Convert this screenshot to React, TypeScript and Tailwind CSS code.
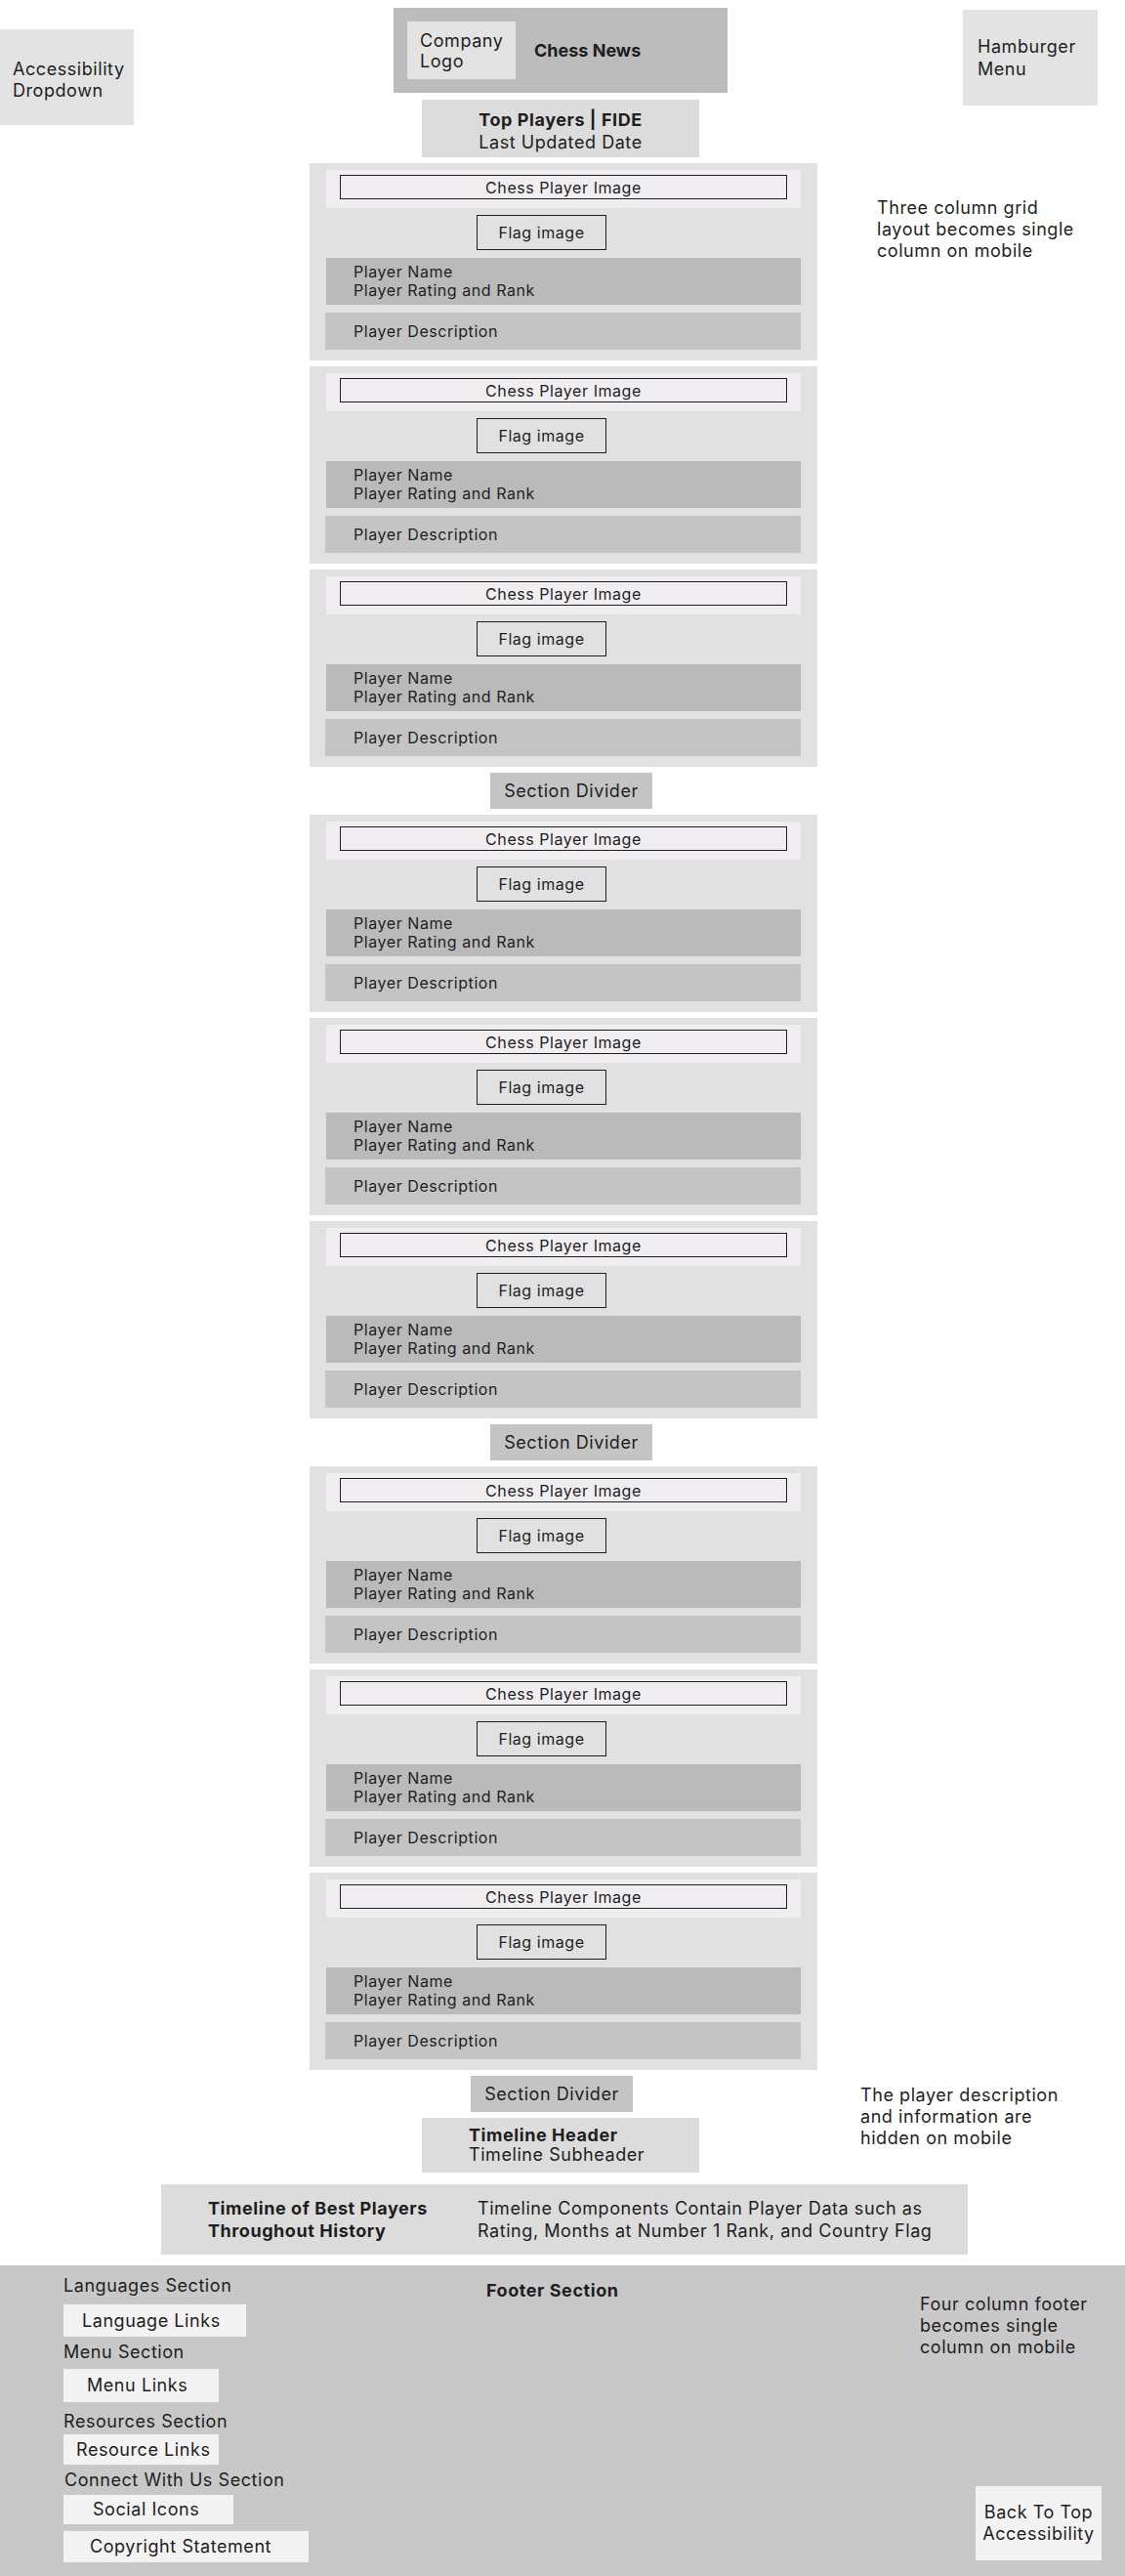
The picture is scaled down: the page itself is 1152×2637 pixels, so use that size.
import React from "react";

function Card() {
  return (
    <div className="w-[520px] h-[202px] bg-[#e1e1e1] px-[17px] pt-[7px] shrink-0">
      <div className="h-[39px] bg-[#f0eef0] px-[14px] pt-[5px]">
        <div className="h-[25px] border border-[#1e1e1e] flex items-center justify-center text-[16px]">
          Chess Player Image
        </div>
      </div>
      <div className="mt-[7px] ml-[154px] w-[133px] h-[36px] border border-[#1e1e1e] flex items-center justify-center text-[16px]">
        Flag image
      </div>
      <div className="mt-[8px] h-[48px] bg-[#bababa] pl-[28px] flex flex-col justify-center text-[16px] leading-[19px]">
        <span>Player Name</span>
        <span>Player Rating and Rank</span>
      </div>
      <div className="mt-[8px] -ml-px h-[38px] bg-[#c4c4c4] pl-[29px] flex items-center text-[16px]">
        Player Description
      </div>
    </div>
  );
}

function Divider({ className }: { className: string }) {
  return (
    <div
      className={
        "w-[166px] h-[37px] bg-[#c4c4c4] flex items-center justify-center text-[18px] " +
        className
      }
    >
      Section Divider
    </div>
  );
}

function FooterLink({ label, w, h, pl }: { label: string; w: string; h: string; pl: string }) {
  return (
    <div className={"bg-[#f3f3f3] flex items-center text-[18px] " + w + " " + h + " " + pl}>{label}</div>
  );
}

export default function App() {
  return (
    <div className="w-[1152px] min-h-[2637px] bg-white text-[#1e1e1e] font-['Inter',sans-serif] tracking-[0.035em] flex flex-col">
      {/* Header row */}
      <div className="flex items-start h-[161px]">
        <div className="mt-[30px] w-[137px] h-[98px] bg-[#e3e3e3] flex flex-col justify-center pl-[13px] pt-[6px] text-[18px] leading-[22px]">
          <span>Accessibility</span>
          <span>Dropdown</span>
        </div>
        <div className="ml-[266px] w-[342px] flex flex-col">
          <div className="mt-[8px] h-[87px] bg-[#bcbcbc] flex items-center pl-[14px]">
            <div className="w-[111px] h-[59px] bg-[#e3e3e3] flex flex-col justify-center pl-[13px] text-[18px] leading-[21px]">
              <span>Company</span>
              <span>Logo</span>
            </div>
            <span className="ml-[19px] text-[18px] font-bold tracking-normal">Chess News</span>
          </div>
          <div className="mt-[7px] ml-[29px] w-[284px] h-[59px] bg-[#dcdcdc] flex flex-col items-center justify-center pt-[4px] text-[18px] leading-[23px]">
            <span className="font-bold">Top Players | FIDE</span>
            <span>Last Updated Date</span>
          </div>
        </div>
        <div className="ml-auto mr-[28px] mt-[10px] w-[138px] h-[98px] bg-[#e3e3e3] flex flex-col justify-center pl-[15px] text-[18px] leading-[23px]">
          <span>Hamburger</span>
          <span>Menu</span>
        </div>
      </div>

      {/* Cards row */}
      <div className="flex items-start mt-[6px]">
        <div className="ml-[317px] w-[520px] flex flex-col gap-[6px]">
          <Card />
          <Card />
          <Card />
          <Divider className="ml-[185px]" />
          <Card />
          <Card />
          <Card />
          <Divider className="ml-[185px]" />
          <Card />
          <Card />
          <Card />
        </div>
        <p className="ml-[61px] mt-[35px] text-[18px] leading-[22px] w-[230px]">
          Three column grid
          <br />
          layout becomes single
          <br />
          column on mobile
        </p>
      </div>

      {/* Timeline header row */}
      <div className="flex items-start">
        <div className="flex flex-col">
          <Divider className="ml-[482px] mt-[6px]" />
          <div className="ml-[432px] mt-[6px] w-[284px] h-[56px] bg-[#dcdcdc] flex flex-col justify-center pl-[48px] text-[18px] leading-[20px]">
            <span className="font-bold">Timeline Header</span>
            <span>Timeline Subheader</span>
          </div>
        </div>
        <p className="ml-[165px] mt-[15px] text-[18px] leading-[22px] w-[250px]">
          The player description
          <br />
          and information are
          <br />
          hidden on mobile
        </p>
      </div>

      {/* Timeline box */}
      <div className="ml-[165px] mt-[12px] w-[826px] h-[72px] bg-[#dcdcdc] flex items-center pl-[48px] text-[18px] leading-[23px]">
        <div className="w-[276px] font-bold flex flex-col">
          <span>Timeline of Best Players</span>
          <span>Throughout History</span>
        </div>
        <div className="flex flex-col">
          <span>Timeline Components Contain Player Data such as</span>
          <span>Rating, Months at Number 1 Rank, and Country Flag</span>
        </div>
      </div>

      {/* Footer */}
      <div className="mt-[11px] h-[318px] bg-[#c8c8c8] flex items-start text-[18px] leading-[22px]">
        <div className="ml-[65px] w-[433px] pt-[10px] flex flex-col items-start">
          <span>Languages Section</span>
          <div className="mt-[8px]">
            <FooterLink label="Language Links" w="w-[187px]" h="h-[33px]" pl="pl-[19px]" />
          </div>
          <span className="mt-[5px]">Menu Section</span>
          <div className="mt-[6px]">
            <FooterLink label="Menu Links" w="w-[159px]" h="h-[34px]" pl="pl-[24px]" />
          </div>
          <span className="mt-[9px]">Resources Section</span>
          <div className="mt-[2px]">
            <FooterLink label="Resource Links" w="w-[159px]" h="h-[31px]" pl="pl-[13px]" />
          </div>
          <span className="mt-[5px] ml-px">Connect With Us Section</span>
          <div className="mt-[4px]">
            <FooterLink label="Social Icons" w="w-[174px]" h="h-[30px]" pl="pl-[30px]" />
          </div>
          <div className="mt-[7px]">
            <FooterLink label="Copyright Statement" w="w-[251px]" h="h-[32px]" pl="pl-[27px]" />
          </div>
        </div>
        <span className="pt-[15px] font-bold">Footer Section</span>
        <div className="ml-auto w-[210px] pt-[29px] flex flex-col">
          <p>
            Four column footer
            <br />
            becomes single
            <br />
            column on mobile
          </p>
          <div className="mt-[131px] ml-[57px] w-[129px] h-[76px] bg-[#f3f3f3] flex flex-col items-center justify-center">
            <span>Back To Top</span>
            <span>Accessibility</span>
          </div>
        </div>
      </div>
    </div>
  );
}
